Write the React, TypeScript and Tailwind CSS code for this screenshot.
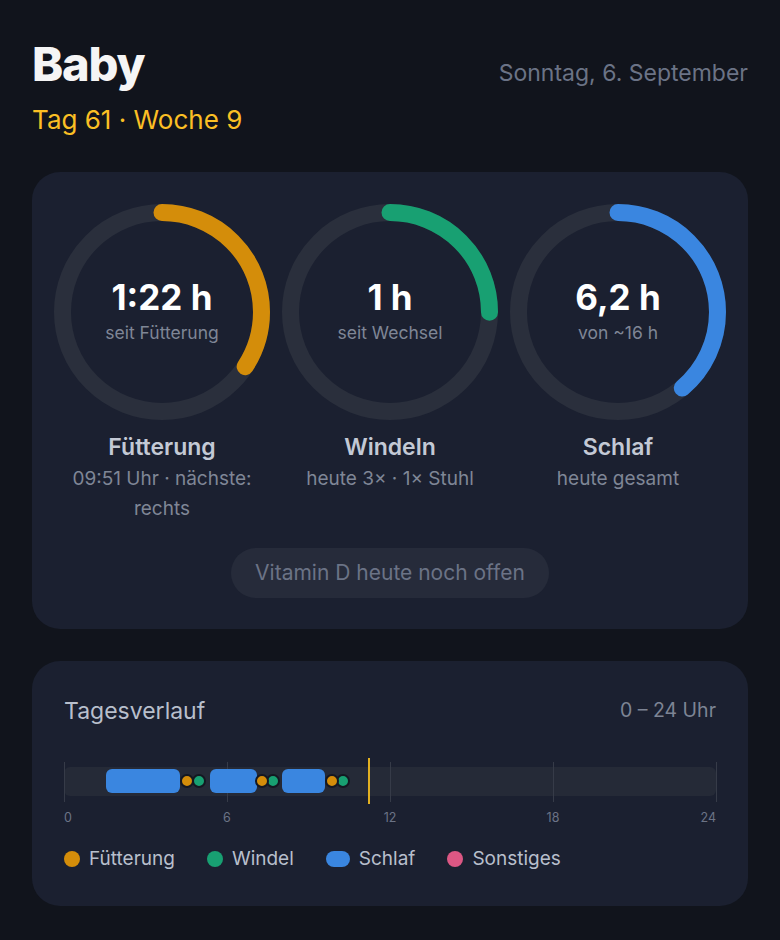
import React from 'react';

interface Gauge {
  value: string;
  caption: string;
  title: string;
  detail: string;
  fraction: number;
  color: string;
}

const gauges: Gauge[] = [
  {
    value: '1:22 h',
    caption: 'seit Fütterung',
    title: 'Fütterung',
    detail: '09:51 Uhr · nächste: rechts',
    fraction: 0.342,
    color: '#d48d0a',
  },
  {
    value: '1 h',
    caption: 'seit Wechsel',
    title: 'Windeln',
    detail: 'heute 3× · 1× Stuhl',
    fraction: 0.25,
    color: '#18a072',
  },
  {
    value: '6,2 h',
    caption: 'von ~16 h',
    title: 'Schlaf',
    detail: 'heute gesamt',
    fraction: 0.3875,
    color: '#3a86e0',
  },
];

const sleeps: [number, number][] = [
  [1.55, 4.27],
  [5.37, 7.09],
  [8.03, 9.61],
];
const feeds = [4.54, 7.28, 9.85];
const diapers = [4.98, 7.7, 10.26];
const now = 11.22;

const pct = (h: number) => `${(h / 24) * 100}%`;

const Ring: React.FC<{ g: Gauge }> = ({ g }) => {
  const r = 99.5;
  const c = 2 * Math.PI * r;
  return (
    <div className="relative w-[216px] h-[216px]">
      <svg width="216" height="216" viewBox="0 0 216 216" className="-rotate-90">
        <circle cx="108" cy="108" r={r} fill="none" stroke="#2a2f3c" strokeWidth="17" />
        <circle
          cx="108"
          cy="108"
          r={r}
          fill="none"
          stroke={g.color}
          strokeWidth="17"
          strokeLinecap="round"
          strokeDasharray={`${g.fraction * c} ${c}`}
        />
      </svg>
      <div className="absolute inset-0 flex flex-col items-center justify-center">
        <div className="text-[35px] leading-9 font-bold text-white">{g.value}</div>
        <div className="mt-1.5 text-[17.5px] leading-6 text-[#7f8696]">{g.caption}</div>
      </div>
    </div>
  );
};

const App: React.FC = () => {
  return (
    <div
      className="min-h-screen bg-[#11141c] px-8 pt-10 pb-10"
      style={{ fontFamily: 'Inter, "Noto Sans", sans-serif' }}
    >
      <header>
        <div className="flex items-baseline justify-between">
          <h1 className="text-[47px] leading-[48px] font-extrabold tracking-tight text-[#f5f5f5]">Baby</h1>
          <div className="text-[23px] text-[#6b7386]">Sonntag, 6. September</div>
        </div>
        <div className="mt-[13px] text-[26px] leading-8 text-[#fbbf24]">Tag 61 · Woche 9</div>
      </header>

      <section className="mt-9 rounded-[28px] bg-[#1b2030] px-4 pt-8 pb-[31px]">
        <div className="grid grid-cols-3">
          {gauges.map(g => (
            <div key={g.title} className="flex flex-col items-center text-center">
              <Ring g={g} />
              <div className="mt-3 text-[23px] leading-[30px] font-semibold text-[#c3c9d5]">{g.title}</div>
              <div className="mt-0.5 max-w-[215px] text-[19px] leading-[30px] text-[#7f8696]">{g.detail}</div>
            </div>
          ))}
        </div>
        <div className="mt-6 flex justify-center">
          <div className="h-[50px] flex items-center rounded-full bg-[#262b3a] px-6 text-[21px] text-[#6b7386]">
            Vitamin D heute noch offen
          </div>
        </div>
      </section>

      <section className="mt-8 rounded-[28px] bg-[#1b2030] px-8 pt-[34px] pb-[33px]">
        <div className="flex items-center justify-between">
          <h2 className="text-[23px] leading-8 text-[#b8bfcc]">Tagesverlauf</h2>
          <div className="text-[19.5px] text-[#7d8494]">0 – 24 Uhr</div>
        </div>

        <div className="relative mt-[31px] h-[46px]">
          <div className="absolute left-0 right-0 top-[9px] h-[29px] rounded-md bg-[#252a37]" />
          {[0, 6, 12, 18, 24].map(h => (
            <div
              key={h}
              className="absolute top-1 h-10 w-px bg-[#363b48]"
              style={{ left: pct(h) }}
            />
          ))}
          {sleeps.map(([a, b]) => (
            <div
              key={a}
              className="absolute top-[11px] h-6 rounded-md bg-[#3a86e0]"
              style={{ left: pct(a), width: pct(b - a) }}
            />
          ))}
          {diapers.map(h => (
            <div
              key={`d${h}`}
              className="absolute top-[23.5px] h-[14px] w-[14px] -translate-x-1/2 -translate-y-1/2 rounded-full border-2 border-[#141822] bg-[#18a072]"
              style={{ left: pct(h) }}
            />
          ))}
          {feeds.map(h => (
            <div
              key={`f${h}`}
              className="absolute top-[23.5px] h-[14px] w-[14px] -translate-x-1/2 -translate-y-1/2 rounded-full border-2 border-[#141822] bg-[#d48d0a]"
              style={{ left: pct(h) }}
            />
          ))}
          <div
            className="absolute top-0 h-[46px] w-[2px] -translate-x-1/2 bg-[#e2b021]"
            style={{ left: pct(now) }}
          />
        </div>

        <div className="relative mt-[6px] h-4 text-[12.5px] leading-4 text-[#6b7386]">
          <span className="absolute left-0">0</span>
          <span className="absolute left-1/4 -translate-x-1/2">6</span>
          <span className="absolute left-1/2 -translate-x-1/2">12</span>
          <span className="absolute left-3/4 -translate-x-1/2">18</span>
          <span className="absolute right-0">24</span>
        </div>

        <div className="mt-[19px] flex items-center gap-8 text-[19px] leading-7 text-[#b8bfcc]">
          <div className="flex items-center gap-[9px]">
            <span className="h-4 w-4 rounded-full bg-[#d48d0a]" />
            Fütterung
          </div>
          <div className="flex items-center gap-[9px]">
            <span className="h-4 w-4 rounded-full bg-[#18a072]" />
            Windel
          </div>
          <div className="flex items-center gap-[9px]">
            <span className="h-4 w-6 rounded-full bg-[#3a86e0]" />
            Schlaf
          </div>
          <div className="flex items-center gap-[9px]">
            <span className="h-4 w-4 rounded-full bg-[#dc5784]" />
            Sonstiges
          </div>
        </div>
      </section>
    </div>
  );
};

export default App;
